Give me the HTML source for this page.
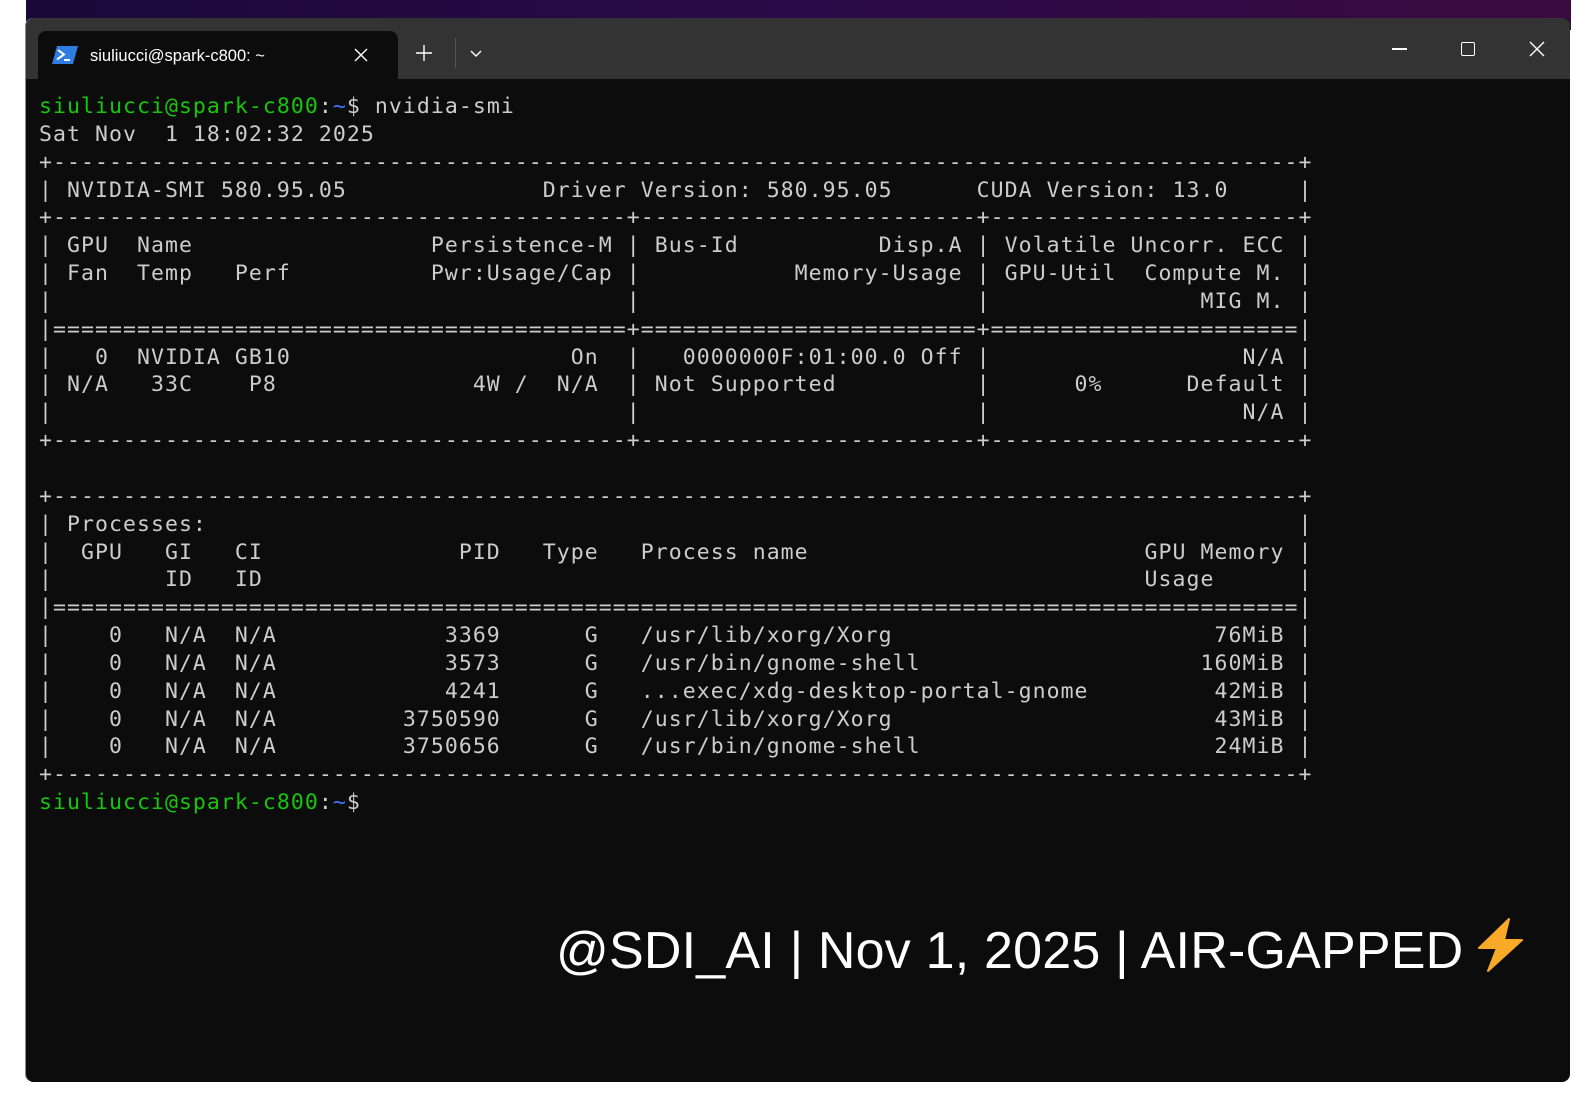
<!DOCTYPE html>
<html><head><meta charset="utf-8"><style>
html,body{margin:0;padding:0;background:#fff;width:1595px;height:1108px;overflow:hidden;position:relative;font-family:"Liberation Sans",sans-serif}
.top{position:absolute;left:26px;top:0;width:1545px;height:30px;background:linear-gradient(90deg,#1a0838,#2a0a48 50%,#3a0a40)}
.win{position:absolute;left:26px;top:18px;width:1544px;height:1064px;background:#0c0c0c;border-radius:8px;overflow:hidden;box-shadow:-1px 0 0 #888}
.bar{position:absolute;left:0;top:0;width:100%;height:61px;background:#333}
.tab{position:absolute;left:12px;top:13px;width:360px;height:48px;background:#0c0c0c;border-radius:8px 8px 0 0}
.tab .t{position:absolute;left:52px;top:16px;color:#fff;font-size:16.5px}
pre{position:absolute;left:13px;top:75px;margin:0;font-family:"DejaVu Sans Mono","Liberation Mono",monospace;font-size:21.5px;letter-spacing:1.05px;line-height:27.84px;color:#cccccc}
.g{color:#16c60c}.b{color:#3b78ff}
.wm{position:absolute;left:530px;top:900px;font-size:52px;color:#fff;white-space:nowrap;letter-spacing:0.2px}
</style></head><body>
<div class="top"></div>
<div class="win">
<div class="bar">
 <div class="tab">
  <svg style="position:absolute;left:14px;top:15px" width="26" height="18" viewBox="0 0 26 18"><path d="M5 0H26L21 18H0Z" fill="#2f7de1"/><path d="M6 4l6 4.5-7 5" stroke="#fff" stroke-width="2" fill="none"/><path d="M12 14h6" stroke="#fff" stroke-width="2"/></svg>
  <span class="t">siuliucci@spark-c800: ~</span>
  <svg style="position:absolute;left:316px;top:17px" width="14" height="14"><path d="M1 1L13 13M13 1L1 13" stroke="#fff" stroke-width="1.4"/></svg>
 </div>
 <svg style="position:absolute;left:390px;top:27px" width="16" height="16"><path d="M8 0V16M0 8H16" stroke="#fff" stroke-width="1.4"/></svg>
 <div style="position:absolute;left:429px;top:20px;width:1px;height:30px;background:#555"></div>
 <svg style="position:absolute;left:444px;top:32px" width="12" height="8"><path d="M1 1L6 6L11 1" stroke="#fff" stroke-width="1.4" fill="none"/></svg>
 <div style="position:absolute;left:1366px;top:30px;width:15px;height:1.5px;background:#fff"></div>
 <div style="position:absolute;left:1435px;top:24px;width:12px;height:12px;border:1.3px solid #fff;border-radius:2px"></div>
 <svg style="position:absolute;left:1503px;top:23px" width="16" height="16"><path d="M1 1L15 15M15 1L1 15" stroke="#fff" stroke-width="1.4"/></svg>
</div>
<pre><span class="g">siuliucci@spark-c800</span>:<span class="b">~</span>$ nvidia-smi
Sat Nov  1 18:02:32 2025
+-----------------------------------------------------------------------------------------+
| NVIDIA-SMI 580.95.05              Driver Version: 580.95.05      CUDA Version: 13.0     |
+-----------------------------------------+------------------------+----------------------+
| GPU  Name                 Persistence-M | Bus-Id          Disp.A | Volatile Uncorr. ECC |
| Fan  Temp   Perf          Pwr:Usage/Cap |           Memory-Usage | GPU-Util  Compute M. |
|                                         |                        |               MIG M. |
|=========================================+========================+======================|
|   0  NVIDIA GB10                    On  |   0000000F:01:00.0 Off |                  N/A |
| N/A   33C    P8              4W /  N/A  | Not Supported          |      0%      Default |
|                                         |                        |                  N/A |
+-----------------------------------------+------------------------+----------------------+

+-----------------------------------------------------------------------------------------+
| Processes:                                                                              |
|  GPU   GI   CI              PID   Type   Process name                        GPU Memory |
|        ID   ID                                                               Usage      |
|=========================================================================================|
|    0   N/A  N/A            3369      G   /usr/lib/xorg/Xorg                       76MiB |
|    0   N/A  N/A            3573      G   /usr/bin/gnome-shell                    160MiB |
|    0   N/A  N/A            4241      G   ...exec/xdg-desktop-portal-gnome         42MiB |
|    0   N/A  N/A         3750590      G   /usr/lib/xorg/Xorg                       43MiB |
|    0   N/A  N/A         3750656      G   /usr/bin/gnome-shell                     24MiB |
+-----------------------------------------------------------------------------------------+
<span class="g">siuliucci@spark-c800</span>:<span class="b">~</span>$</pre>
<div class="wm">@SDI_AI | Nov 1, 2025 | AIR-GAPPED <svg width="46" height="54" viewBox="0 0 46 54" style="vertical-align:-4px"><path d="M31 1L1 30H19L10 53L44 22H26Z" fill="#f8a928" stroke="#f8a928" stroke-width="2" stroke-linejoin="round"/></svg></div>
</div>
</body></html>
